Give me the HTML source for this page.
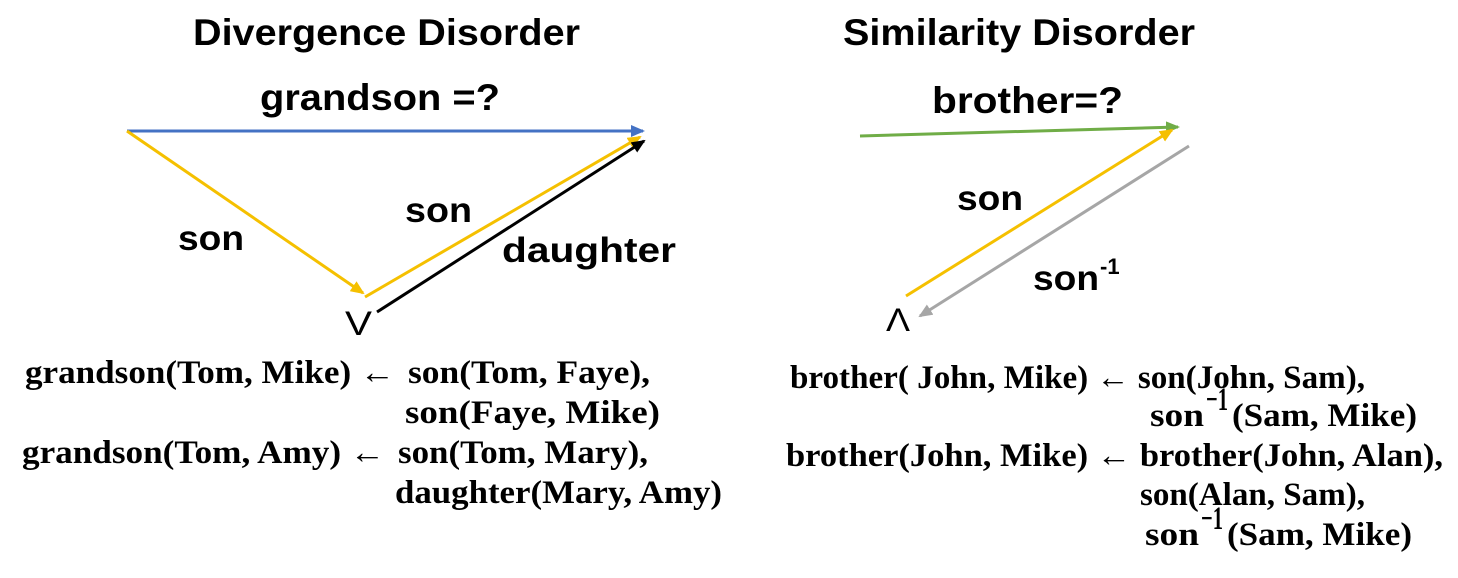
<!DOCTYPE html>
<html><head><meta charset="utf-8"><style>
html,body{margin:0;padding:0;background:#fff;}
svg{display:block}
.t{font-family:"Liberation Sans",sans-serif;font-weight:bold;fill:#000}
.f{font-family:"Liberation Serif",serif;font-weight:bold;font-size:33px;fill:#000}
</style></head><body>
<svg width="1458" height="578" viewBox="0 0 1458 578" xmlns="http://www.w3.org/2000/svg">
<defs>
<marker id="ab" markerWidth="14" markerHeight="12" refX="12" refY="6" orient="auto" markerUnits="userSpaceOnUse"><path d="M0,0 L14,6 L0,12 Z" fill="#4472c4"/></marker>
<marker id="ay" markerWidth="14" markerHeight="12" refX="12" refY="6" orient="auto" markerUnits="userSpaceOnUse"><path d="M0,0 L14,6 L0,12 Z" fill="#f5c000"/></marker>
<marker id="ak" markerWidth="14" markerHeight="12" refX="12" refY="6" orient="auto" markerUnits="userSpaceOnUse"><path d="M0,0 L14,6 L0,12 Z" fill="#000"/></marker>
<marker id="ag" markerWidth="14" markerHeight="12" refX="12" refY="6" orient="auto" markerUnits="userSpaceOnUse"><path d="M0,0 L14,6 L0,12 Z" fill="#70ad47"/></marker>
<marker id="aa" markerWidth="14" markerHeight="12" refX="12" refY="6" orient="auto" markerUnits="userSpaceOnUse"><path d="M0,0 L14,6 L0,12 Z" fill="#a6a6a6"/></marker>
</defs>
<text class="t" x="193" y="45" font-size="37" textLength="387" lengthAdjust="spacingAndGlyphs">Divergence Disorder</text>
<text class="t" x="260" y="110" font-size="37" textLength="240" lengthAdjust="spacingAndGlyphs">grandson =?</text>
<text class="t" x="843" y="45" font-size="37" textLength="352" lengthAdjust="spacingAndGlyphs">Similarity Disorder</text>
<text class="t" x="932" y="113" font-size="37" textLength="191" lengthAdjust="spacingAndGlyphs">brother=?</text>

<line x1="127" y1="131" x2="643" y2="131" stroke="#4472c4" stroke-width="3" marker-end="url(#ab)"/>
<line x1="127" y1="131" x2="363" y2="293" stroke="#f5c000" stroke-width="3" marker-end="url(#ay)"/>
<line x1="365" y1="297" x2="640" y2="137" stroke="#f5c000" stroke-width="3" marker-end="url(#ay)"/>
<line x1="377" y1="312" x2="644" y2="141" stroke="#000" stroke-width="3" marker-end="url(#ak)"/>
<text class="t" x="178" y="250" font-size="35" textLength="66" lengthAdjust="spacingAndGlyphs">son</text>
<text class="t" x="405" y="222" font-size="35" textLength="67" lengthAdjust="spacingAndGlyphs">son</text>
<text class="t" x="502" y="262" font-size="35" textLength="174" lengthAdjust="spacingAndGlyphs">daughter</text>
<text x="345" y="335" font-family="Liberation Sans,sans-serif" font-size="34" textLength="27" lengthAdjust="spacingAndGlyphs">V</text>

<line x1="860" y1="136" x2="1178" y2="127" stroke="#70ad47" stroke-width="3" marker-end="url(#ag)"/>
<line x1="906" y1="296" x2="1172" y2="130" stroke="#f5c000" stroke-width="3" marker-end="url(#ay)"/>
<line x1="1189" y1="146" x2="920" y2="316" stroke="#a6a6a6" stroke-width="3" marker-end="url(#aa)"/>
<text class="t" x="957" y="210" font-size="35" textLength="66" lengthAdjust="spacingAndGlyphs">son</text>
<text class="t" x="1033" y="290" font-size="35" textLength="66" lengthAdjust="spacingAndGlyphs">son</text>
<text class="t" x="1100" y="274" font-size="22">-1</text>
<text x="886" y="331" font-family="Liberation Sans,sans-serif" font-size="32" textLength="24" lengthAdjust="spacingAndGlyphs">Λ</text>

<text class="f" x="25" y="383" textLength="370" lengthAdjust="spacingAndGlyphs">grandson(Tom, Mike) ←</text>
<text class="f" x="408" y="383" textLength="242" lengthAdjust="spacingAndGlyphs">son(Tom, Faye),</text>
<text class="f" x="405" y="423" textLength="255" lengthAdjust="spacingAndGlyphs">son(Faye, Mike)</text>
<text class="f" x="22" y="463" textLength="363" lengthAdjust="spacingAndGlyphs">grandson(Tom, Amy) ←</text>
<text class="f" x="398" y="463" textLength="250" lengthAdjust="spacingAndGlyphs">son(Tom, Mary),</text>
<text class="f" x="395" y="503" textLength="327" lengthAdjust="spacingAndGlyphs">daughter(Mary, Amy)</text>

<text class="f" x="790" y="388" textLength="575" lengthAdjust="spacingAndGlyphs">brother( John, Mike) ← son(John, Sam),</text>
<text class="f" x="1150" y="426" textLength="54" lengthAdjust="spacingAndGlyphs">son</text>
<text class="f" x="1206" y="410" font-size="19" textLength="22" lengthAdjust="spacingAndGlyphs">−1</text>
<text class="f" x="1232" y="426" textLength="185" lengthAdjust="spacingAndGlyphs">(Sam, Mike)</text>
<text class="f" x="786" y="466" textLength="657" lengthAdjust="spacingAndGlyphs">brother(John, Mike) ← brother(John, Alan),</text>
<text class="f" x="1140" y="505" textLength="225" lengthAdjust="spacingAndGlyphs">son(Alan, Sam),</text>
<text class="f" x="1145" y="545" textLength="54" lengthAdjust="spacingAndGlyphs">son</text>
<text class="f" x="1201" y="529" font-size="19" textLength="22" lengthAdjust="spacingAndGlyphs">−1</text>
<text class="f" x="1227" y="545" textLength="185" lengthAdjust="spacingAndGlyphs">(Sam, Mike)</text>
</svg>
</body></html>
